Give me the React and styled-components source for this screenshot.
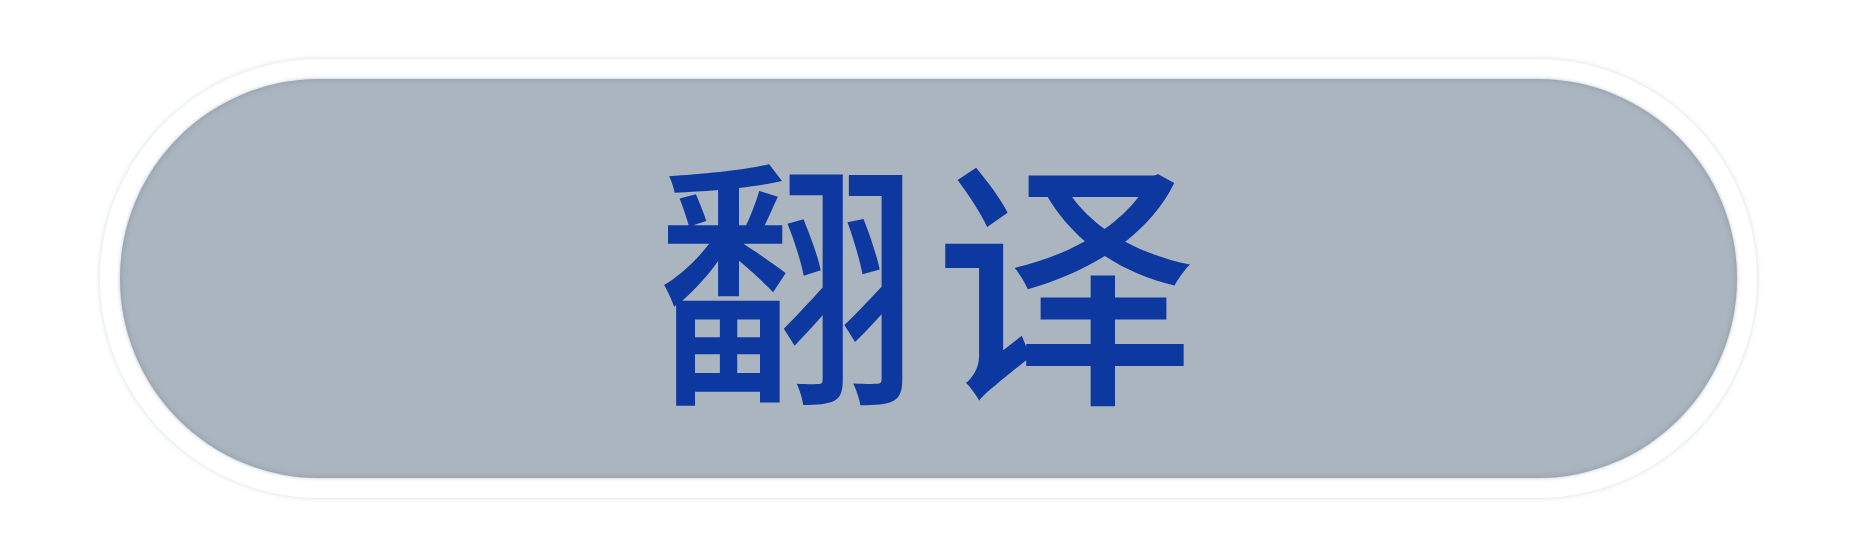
import React from 'react';
import styled, { createGlobalStyle } from 'styled-components';

const GlobalStyle = createGlobalStyle`
  html, body {
    margin: 0;
    padding: 0;
    background: #ffffff;
  }
`;

const Page = styled.div`
  width: 1852px;
  height: 560px;
  display: flex;
  justify-content: center;
  align-items: center;
  padding-left: 5px;
  padding-bottom: 3px;
  box-sizing: border-box;
`;

// white ring around the button with a faint grey rim
const Halo = styled.div`
  padding: 20px;
  border-radius: 9999px;
  background: #ffffff;
  box-shadow: 0 0 4px 1px rgba(170, 182, 194, 0.35);
`;

const PillButton = styled.button`
  width: 1617px;
  height: 399px;
  border: none;
  border-radius: 9999px;
  background: #abb5bf;
  box-shadow: inset 0 0 5px 1px rgba(125, 139, 153, 0.5), 0 0 3px 1px rgba(171, 181, 191, 0.5);
  display: flex;
  justify-content: center;
  align-items: center;
  padding: 0;
  cursor: pointer;
`;

const Label = styled.span`
  font-family: "Noto Sans CJK SC", "Noto Sans", sans-serif;
  font-size: 262px;
  font-weight: 500;
  line-height: 1;
  color: #0d38a0;
  letter-spacing: ${(p) => p.$gap}px;
  margin-top: -18px;
  margin-right: ${(p) => 5 - p.$gap}px;
`;

export default function App() {
  return (
    <>
      <GlobalStyle />
      <Page>
        <Halo>
          <PillButton>
            <Label $gap={16}>翻译</Label>
          </PillButton>
        </Halo>
      </Page>
    </>
  );
}
